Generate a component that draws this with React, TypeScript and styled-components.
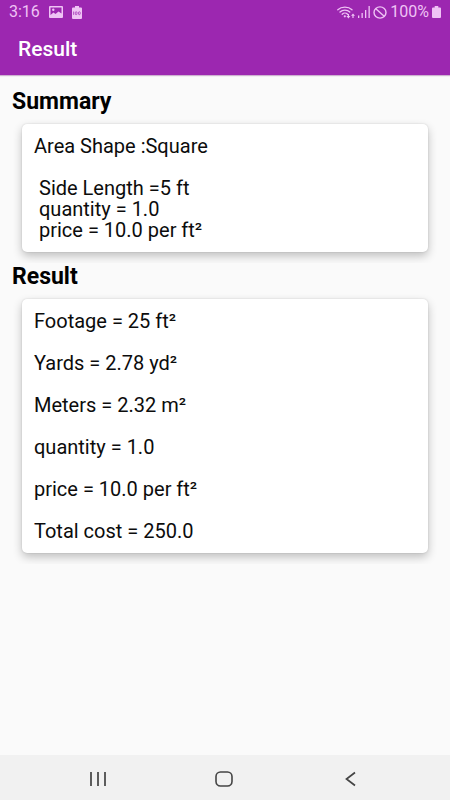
import React from "react";
import styled, { createGlobalStyle } from "styled-components";

const GlobalStyle = createGlobalStyle`
  * { box-sizing: border-box; }
  body {
    margin: 0;
    background: #fafafa;
    color: #0c0c0c;
    font-family: Roboto, "Liberation Sans", sans-serif;
  }
`;

const Screen = styled.div`
  min-height: 100vh;
  display: flex;
  flex-direction: column;
`;

const Header = styled.header`
  background: #9c27b0;
  box-shadow: 0 1px 1px rgba(120, 40, 130, 0.35);
`;

const StatusBar = styled.div`
  height: 24px;
  padding: 0 9px;
  display: flex;
  align-items: center;
  justify-content: space-between;
  color: #efc3f5;
  font-size: 16px;
  line-height: 24px;
`;

const StatusGroup = styled.div<{ $gap: number }>`
  display: flex;
  align-items: center;
  gap: ${({ $gap }) => $gap}px;

  svg { display: block; }
`;

const Title = styled.h1`
  margin: 0;
  padding: 0 18px;
  height: 51px;
  color: #fff;
  font-size: 21px;
  font-weight: 500;
  line-height: 51px;
`;

const Content = styled.main`
  flex: 1;
  padding: 13px 12px 0;
`;

const Section = styled.section`
  padding-bottom: 11px;
  overflow: hidden;
`;

const SectionTitle = styled.h2`
  margin: 0 0 9px;
  color: #000;
  font-size: 23px;
  font-weight: 700;
  line-height: 27px;
`;

const Card = styled.div`
  margin: 0 10px;
  padding: 12px 12px 11px;
  border-radius: 5px;
  background: #fff;
  box-shadow: 0 4px 10px rgba(0, 0, 0, 0.24), 0 0 2px rgba(0, 0, 0, 0.14);
  display: flex;
  flex-direction: column;
  gap: 21px;
`;

const Text = styled.p<{ $indent?: boolean }>`
  margin: 0;
  padding-left: ${({ $indent }) => ($indent ? 5 : 0)}px;
  font-size: 20px;
  line-height: 21px;
  white-space: pre-line;
`;

const NavBar = styled.nav`
  height: 45px;
  padding: 0 35px;
  display: flex;
  align-items: center;
  background: #f1f1f1;
`;

const NavButton = styled.button`
  flex: 1;
  height: 45px;
  padding: 2px 0 0;
  border: 0;
  background: none;
  display: flex;
  align-items: center;
  justify-content: center;
  color: #444;
`;

const PictureIcon = () => (
  <svg width="14" height="12" viewBox="0 0 14 12" aria-hidden="true">
    <path
      fill="currentColor"
      fillRule="evenodd"
      d="M1 0h12a1 1 0 0 1 1 1v10a1 1 0 0 1-1 1H1a1 1 0 0 1-1-1V1a1 1 0 0 1 1-1Zm.5 1.500v7.500l3-2.500 2 1.500 3-2.500 3 2v-6Z"
    />
    <circle cx="4.300" cy="3.700" r="1.200" fill="currentColor" />
  </svg>
);

const ChargedIcon = () => (
  <svg width="10" height="13" viewBox="0 0 10 13" aria-hidden="true">
    <path fill="currentColor" d="M3 0h4v1.500h2a1 1 0 0 1 1 1V12a1 1 0 0 1-1 1H1a1 1 0 0 1-1-1V2.500a1 1 0 0 1 1-1h2Z" />
    <g fill="none" stroke="#9c27b0" strokeWidth=".7">
      <path d="M1.600 5.500v3.400" />
      <rect x="3.300" y="5.800" width="1.700" height="2.800" rx=".7" />
      <rect x="6.500" y="5.800" width="1.700" height="2.800" rx=".7" />
    </g>
  </svg>
);

const WifiIcon = () => (
  <svg width="18" height="13" viewBox="0 0 18 13" aria-hidden="true">
    <g fill="none" stroke="currentColor" strokeWidth="1.300" strokeLinecap="round">
      <path d="M.8 3.700C4.500.2 11.300.2 15 3.700" />
      <path d="M3 6c2.700-2.500 7.100-2.500 9.800 0" />
      <path d="M5.200 8.200c1.500-1.500 3.900-1.500 5.400 0" />
    </g>
    <circle cx="7.800" cy="10.300" r="1.100" fill="currentColor" />
    <path fill="currentColor" d="M10.800 8h1.200v2h1.400l-2 2.400-2-2.400h1.400ZM15.400 12h1.200V9.800H18l-2-2.400-2 2.400h1.400Z" />
  </svg>
);

const SignalIcon = () => (
  <svg width="12" height="12" viewBox="0 0 12 12" aria-hidden="true">
    <path fill="currentColor" d="M0 9.500h1.300V12H0ZM3.500 7h1.300v5H3.500ZM7 4h1.300v8H7ZM10.500 0h1.300v12h-1.300Z" />
  </svg>
);

const BlockedIcon = () => (
  <svg width="14" height="13" viewBox="0 0 14 13" aria-hidden="true">
    <g fill="none" stroke="currentColor" strokeWidth="1.400">
      <ellipse cx="7" cy="6.500" rx="6" ry="5.600" />
      <path d="m2.800 2.700 8.400 7.600" />
    </g>
  </svg>
);

const BatteryIcon = () => (
  <svg width="9" height="12" viewBox="0 0 9 12" aria-hidden="true">
    <path fill="currentColor" d="M2.700 0h3.600v1.500H8a1 1 0 0 1 1 1V11a1 1 0 0 1-1 1H1a1 1 0 0 1-1-1V2.500a1 1 0 0 1 1-1h1.700Z" />
  </svg>
);

const RecentsIcon = () => (
  <svg width="18" height="16" viewBox="0 0 18 16" aria-hidden="true">
    <path d="M2 1v14M9 1v14M16 1v14" stroke="currentColor" strokeWidth="1.700" />
  </svg>
);

const HomeIcon = () => (
  <svg width="20" height="16" viewBox="0 0 20 16" aria-hidden="true">
    <rect x="1" y="1" width="16" height="14" rx="4.500" fill="none" stroke="currentColor" strokeWidth="1.600" />
  </svg>
);

const BackIcon = () => (
  <svg width="14" height="16" viewBox="0 0 14 16" aria-hidden="true">
    <path d="M10 1.500 1.500 8l8.500 6.500" fill="none" stroke="currentColor" strokeWidth="1.700" />
  </svg>
);

const dimensions = ["Side Length =5 ft", "quantity = 1.0", "price = 10.0 per ft²"];

const results = [
  "Footage = 25 ft²",
  "Yards = 2.78 yd²",
  "Meters = 2.32 m²",
  "quantity = 1.0",
  "price = 10.0 per ft²",
  "Total cost = 250.0",
];

export default function App() {
  return (
    <>
      <GlobalStyle />
      <Screen>
        <Header>
          <StatusBar>
            <StatusGroup $gap={9}>
              <span>3:16</span>
              <PictureIcon />
              <ChargedIcon />
            </StatusGroup>
            <StatusGroup $gap={3}>
              <WifiIcon />
              <SignalIcon />
              <BlockedIcon />
              <span>100%</span>
              <BatteryIcon />
            </StatusGroup>
          </StatusBar>
          <Title>Result</Title>
        </Header>
        <Content>
          <Section>
            <SectionTitle>Summary</SectionTitle>
            <Card>
              <Text>Area Shape :Square</Text>
              <Text $indent>{dimensions.join("\n")}</Text>
            </Card>
          </Section>
          <Section>
            <SectionTitle>Result</SectionTitle>
            <Card>
              {results.map((line) => (
                <Text key={line}>{line}</Text>
              ))}
            </Card>
          </Section>
        </Content>
        <NavBar aria-label="System navigation">
          <NavButton type="button" aria-label="Recent apps"><RecentsIcon /></NavButton>
          <NavButton type="button" aria-label="Home"><HomeIcon /></NavButton>
          <NavButton type="button" aria-label="Back"><BackIcon /></NavButton>
        </NavBar>
      </Screen>
    </>
  );
}
